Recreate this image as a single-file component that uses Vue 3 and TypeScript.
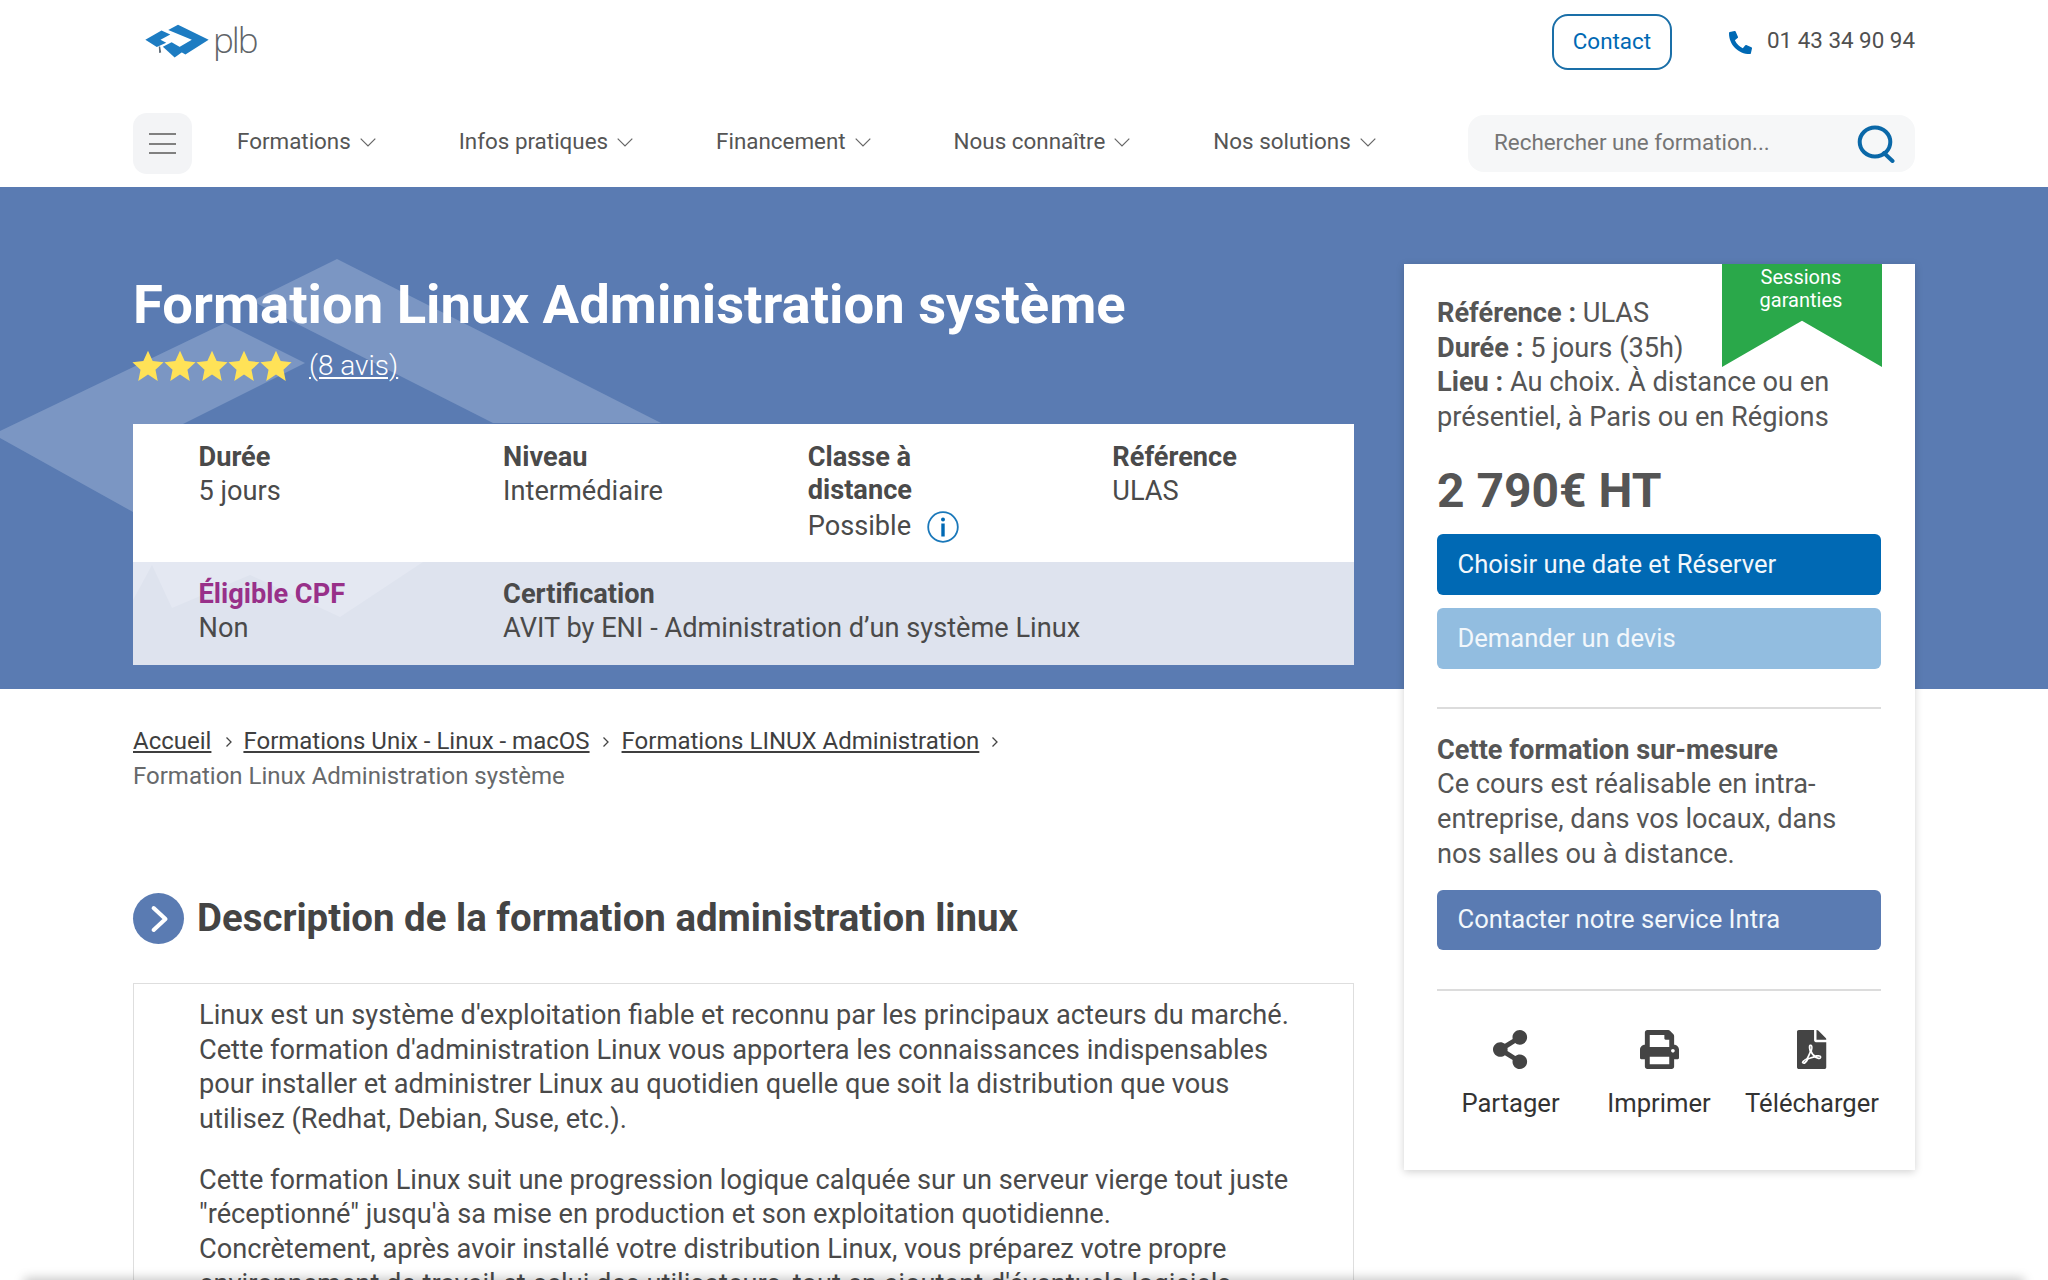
<script setup lang="ts">
const navItems: string[] = ['Formations', 'Infos pratiques', 'Financement', 'Nous connaître', 'Nos solutions']
const stars: number[] = [1, 2, 3, 4, 5]
</script>

<template>
  <div class="page">
    <header class="header">
      <div class="top">
        <a class="logo">
          <svg class="logo__mark" viewBox="24 32 196 104" aria-hidden="true">
            <path fill="#1d7cc2" d="M125 36 216 80 147 124 119 108 166 80 96 51Z" />
            <path fill="#1d7cc2" d="M28 80 76 53 102 65 73 80 90 89 62 102Z" />
            <path fill="#1d7cc2" d="M80 101 106 88 146 111 115 133Z" />
            <path fill="#5d6b78" d="M68 100 72 100 75 118 69 120Z" />
          </svg>
          <span class="logo__text">plb</span>
        </a>
        <a class="contact">Contact</a>
        <svg class="phone-icon" viewBox="0 0 512 512" aria-hidden="true">
          <path d="M497.39 361.8l-112-48a24 24 0 0 0-28 6.9l-49.6 60.6A370.66 370.66 0 0 1 130.6 204.11l60.6-49.6a23.94 23.94 0 0 0 6.9-28l-48-112A24.16 24.16 0 0 0 122.6.61l-104 24A24 24 0 0 0 0 48c0 256.5 207.9 464 464 464a24 24 0 0 0 23.4-18.6l24-104a24.29 24.29 0 0 0-14.01-27.6z" />
        </svg>
        <span class="phone">01 43 34 90 94</span>
      </div>

      <nav class="nav">
        <button class="burger" aria-label="Menu">
          <span></span><span></span><span></span>
        </button>
        <ul class="nav__list">
          <li v-for="item in navItems" :key="item" class="nav__item">
            {{ item }}
            <svg class="nav__chevron" viewBox="0 0 16 9" aria-hidden="true">
              <path d="M.7.7 8 8 15.300.7" />
            </svg>
          </li>
        </ul>
        <div class="search">
          <span class="search__text">Rechercher une formation...</span>
          <svg class="search__icon" viewBox="0 0 38 38" aria-hidden="true">
            <ellipse cx="18" cy="17" rx="15.300" ry="14.500" />
            <path d="M27 28 35.500 36" />
          </svg>
        </div>
      </nav>
    </header>

    <main class="main">
      <div class="hero-bg" aria-hidden="true">
        <svg class="hero-bg__art" viewBox="0 0 2048 502">
          <path fill="#7b96c3" d="M337 72 661 236 493 236 252 114Z" />
          <path fill="#7b96c3" d="M225 136 305 176 133 262 133 325 0 251 0 244Z" />
        </svg>
      </div>

      <section class="content">
        <div class="hero">
          <h1 class="hero__title">Formation Linux Administration système</h1>
          <div class="rating">
            <svg v-for="s in stars" :key="s" class="rating__star" viewBox="0 0 24 24" aria-hidden="true">
              <path d="M12 .6l3.500 7.700 8.200.9-6.100 5.700 1.700 8.400L12 18.400l-7.300 4.900 1.700-8.400L.3 9.200l8.200-.9z" />
            </svg>
            <a class="rating__link">(8 avis)</a>
          </div>

          <div class="facts">
            <div class="facts__row facts__row--top">
              <div class="fact">
                <strong>Durée</strong>
                <span>5 jours</span>
              </div>
              <div class="fact">
                <strong>Niveau</strong>
                <span>Intermédiaire</span>
              </div>
              <div class="fact">
                <strong>Classe à<br />distance</strong>
                <span class="fact__possible">
                  Possible
                  <svg class="info-icon" viewBox="0 0 32 32" aria-hidden="true">
                    <circle cx="16" cy="16" r="14.800" fill="none" stroke="#1a78ba" stroke-width="1.800" />
                    <circle cx="16" cy="8.500" r="2" fill="#0069b4" />
                    <rect x="14.300" y="12.500" width="3.400" height="13" fill="#0069b4" />
                  </svg>
                </span>
              </div>
              <div class="fact">
                <strong>Référence</strong>
                <span>ULAS</span>
              </div>
            </div>
            <div class="facts__row facts__row--bottom">
              <svg class="facts__art" viewBox="0 0 1221 103" aria-hidden="true">
                <path fill="#e4e8f2" d="M37 0 290 0 207 55 117 13 39 46 19 3 0 38 0 0Z" />
              </svg>
              <div class="fact">
                <strong class="fact__cpf">Éligible CPF</strong>
                <span>Non</span>
              </div>
              <div class="fact fact--wide">
                <strong>Certification</strong>
                <span>AVIT by ENI - Administration d’un système Linux</span>
              </div>
            </div>
          </div>
        </div>

        <ol class="crumbs">
          <li>
            <a>Accueil</a>
            <i><svg viewBox="0 0 8 12" aria-hidden="true"><path d="M1.500 1.500 6 6 1.500 10.500" /></svg></i>
          </li>
          <li>
            <a>Formations Unix - Linux - macOS</a>
            <i><svg viewBox="0 0 8 12" aria-hidden="true"><path d="M1.500 1.500 6 6 1.500 10.500" /></svg></i>
          </li>
          <li>
            <a>Formations LINUX Administration</a>
            <i><svg viewBox="0 0 8 12" aria-hidden="true"><path d="M1.500 1.500 6 6 1.500 10.500" /></svg></i>
          </li>
          <li class="crumbs__current">Formation Linux Administration système</li>
        </ol>

        <div class="section-title">
          <span class="section-title__badge">
            <svg viewBox="0 0 22 30" aria-hidden="true">
              <path d="M4 3 17 15 4 27" />
            </svg>
          </span>
          <h2>Description de la formation administration linux</h2>
        </div>

        <div class="description">
          <p>Linux est un système d'exploitation fiable et reconnu par les principaux acteurs du marché. Cette formation d'administration Linux vous apportera les connaissances indispensables pour installer et administrer Linux au quotidien quelle que soit la distribution que vous utilisez (Redhat, Debian, Suse, etc.).</p>
          <p>Cette formation Linux suit une progression logique calquée sur un serveur vierge tout juste "réceptionné" jusqu'à sa mise en production et son exploitation quotidienne.<br />Concrètement, après avoir installé votre distribution Linux, vous préparez votre propre environnement de travail et celui des utilisateurs, tout en ajoutant d'éventuels logiciels</p>
        </div>
      </section>

      <aside class="card">
        <div class="ribbon">Sessions<br />garanties</div>
        <p class="card__info">
          <b>Référence :</b> ULAS<br />
          <b>Durée :</b> 5 jours (35h)<br />
          <b>Lieu :</b> Au choix. À distance ou en présentiel, à Paris ou en Régions
        </p>
        <div class="card__price">2 790€ HT</div>
        <a class="btn btn--primary">Choisir une date et Réserver</a>
        <a class="btn btn--light">Demander un devis</a>
        <hr class="card__rule" />
        <p class="card__custom">
          <b>Cette formation sur-mesure</b><br />
          Ce cours est réalisable en intra-entreprise, dans vos locaux, dans nos salles ou à distance.
        </p>
        <a class="btn btn--intra">Contacter notre service Intra</a>
        <hr class="card__rule card__rule--last" />
        <div class="actions">
          <a class="action">
            <svg viewBox="0 0 448 512" aria-hidden="true">
              <path d="M352 320c-22.608 0-43.387 7.819-59.79 20.895l-102.486-64.054a96.551 96.551 0 0 0 0-41.683l102.486-64.054C308.613 184.181 329.392 192 352 192c53.019 0 96-42.981 96-96S405.019 0 352 0s-96 42.981-96 96c0 7.158.79 14.13 2.276 20.841L155.79 180.895C139.387 167.819 118.608 160 96 160c-53.019 0-96 42.981-96 96s42.981 96 96 96c22.608 0 43.387-7.819 59.79-20.895l102.486 64.054A96.301 96.301 0 0 0 256 416c0 53.019 42.981 96 96 96s96-42.981 96-96-42.981-96-96-96z" />
            </svg>
            <span>Partager</span>
          </a>
          <a class="action">
            <svg viewBox="0 0 512 512" aria-hidden="true">
              <path d="M448 192V77.25c0-8.49-3.37-16.62-9.37-22.63L393.37 9.37c-6-6-14.14-9.37-22.63-9.37H96C78.33 0 64 14.33 64 32v160c-35.35 0-64 28.65-64 64v112c0 8.84 7.16 16 16 16h48v96c0 17.67 14.33 32 32 32h320c17.67 0 32-14.33 32-32v-96h48c8.84 0 16-7.16 16-16V256c0-35.35-28.65-64-64-64zm-64 256H128v-96h256v96zm0-224H128V64h192v48c0 8.84 7.16 16 16 16h48v96zm48 72c-13.25 0-24-10.75-24-24 0-13.26 10.75-24 24-24s24 10.74 24 24c0 13.25-10.75 24-24 24z" />
            </svg>
            <span>Imprimer</span>
          </a>
          <a class="action">
            <svg viewBox="0 0 384 512" aria-hidden="true">
              <path d="M181.9 256.1c-5-16-4.9-46.9-2-46.9 8.4 0 7.6 36.9 2 46.9zm-1.7 47.2c-7.7 20.2-17.3 43.3-28.4 62.7 18.3-7 39-17.2 62.9-21.9-12.7-9.6-24.9-23.4-34.5-40.8zM86.1 428.1c0 .8 13.2-5.4 34.9-40.2-6.7 6.3-29.1 24.5-34.9 40.2zM248 160h136v328c0 13.3-10.7 24-24 24H24c-13.3 0-24-10.7-24-24V24C0 10.7 10.7 0 24 0h200v136c0 13.2 10.8 24 24 24zm-8 171.8c-20-12.2-33.3-29-42.7-53.8 4.5-18.5 11.6-46.6 6.2-64.2-4.7-29.4-42.4-26.5-47.8-6.8-5 18.3-.4 44.1 8.1 77-11.6 27.6-28.7 64.6-40.8 85.8-.1 0-.1.1-.2.1-27.1 13.9-73.6 44.5-54.5 68 5.6 6.9 16 10 21.5 10 17.9 0 35.7-18 61.1-61.8 25.8-8.5 54.1-19.1 79-23.2 21.7 11.8 47.1 19.5 64 19.5 29.2 0 31.2-32 19.7-43.4-13.9-13.6-54.3-9.7-73.6-7.2zM377 105L279 7c-4.5-4.5-10.6-7-17-7h-6v128h128v-6.1c0-6.3-2.5-12.4-7-16.9zm-74.1 255.3c4.1-2.7-2.5-11.9-42.8-9 37.1 15.8 42.8 9 42.8 9z" />
            </svg>
            <span>Télécharger</span>
          </a>
        </div>
      </aside>
    </main>

    <div class="bottom-bar" aria-hidden="true"></div>
  </div>
</template>

<style>
html,
body {
  margin: 0;
  background: #fff;
}
</style>

<style scoped>
.page {
  position: relative;
  height: 1280px;
  overflow: hidden;
  font-family: Roboto, "Liberation Sans", sans-serif;
  font-size: 27.2px;
  line-height: 34.67px;
  color: #4a4a4a;
  background: #fff;
}

/* header */
.header {
  height: 187px;
  padding: 0 133px;
  box-sizing: border-box;
}

.top {
  display: flex;
  align-items: center;
  height: 84px;
}

.logo {
  display: flex;
  align-items: center;
  gap: 3px;
  margin: -3px auto 0 11px;
}

.logo__mark {
  width: 66px;
  height: 36px;
}

.logo__text {
  font-family: "Open Sans", sans-serif;
  font-size: 35px;
  font-weight: 300;
  letter-spacing: -2px;
  color: #5f6468;
}

.contact {
  display: flex;
  align-items: center;
  justify-content: center;
  width: 120px;
  height: 56px;
  padding-bottom: 2px;
  box-sizing: border-box;
  border: 2px solid #1a6fa8;
  border-radius: 16px;
  font-size: 22.4px;
  color: #0069b4;
}

.phone-icon {
  width: 23px;
  height: 23px;
  margin: 1px 0 0 57px;
  fill: #0069b4;
}

.phone {
  margin: -3px 0 0 15px;
  font-size: 22.4px;
  color: #505050;
}

.nav {
  display: flex;
  align-items: center;
  height: 61px;
  margin-top: 29px;
}

.burger {
  display: flex;
  flex-direction: column;
  align-items: center;
  justify-content: center;
  gap: 7.500px;
  width: 59px;
  height: 61px;
  padding: 0;
  border: 0;
  border-radius: 14px;
  background: #f3f4f6;
}

.burger span {
  width: 27px;
  height: 2px;
  background: #808080;
}

.nav__list {
  display: flex;
  gap: 83px;
  margin: -5px auto 0 45px;
  padding: 0;
  list-style: none;
}

.nav__item {
  display: flex;
  align-items: center;
  gap: 9px;
  font-size: 22.4px;
  color: #555;
  white-space: nowrap;
}

.nav__chevron {
  width: 16px;
  height: 9px;
  margin-top: 4px;
  fill: none;
  stroke: #666;
  stroke-width: 1.200;
}

.search {
  display: flex;
  align-items: center;
  justify-content: space-between;
  width: 447px;
  height: 57px;
  padding: 0 20px 0 26px;
  box-sizing: border-box;
  border-radius: 16px;
  background: #f6f7f8;
}

.search__text {
  margin-top: -2px;
  font-size: 22.4px;
  color: #757575;
}

.search__icon {
  width: 38px;
  height: 38px;
  fill: none;
  stroke: #0a68a8;
  stroke-width: 4;
  stroke-linecap: round;
}

/* page body */
.main {
  position: relative;
  display: grid;
  grid-template-columns: 1221px 511px;
  column-gap: 50px;
  align-items: start;
  padding: 0 133px;
}

.hero-bg {
  position: absolute;
  top: 0;
  left: 0;
  width: 2048px;
  height: 502px;
  background: #5a7bb2;
}

.hero-bg__art {
  display: block;
  width: 2048px;
  height: 502px;
}

.content {
  position: relative;
  min-width: 0;
}

.hero {
  height: 502px;
  padding-top: 80px;
  box-sizing: border-box;
}

.hero__title {
  margin: 0;
  font-size: 54.4px;
  line-height: 76px;
  font-weight: 700;
  color: #fff;
}

.rating {
  display: flex;
  align-items: center;
  height: 34px;
  margin-top: 6px;
}

.rating__star {
  width: 32px;
  height: 32px;
  fill: #ffe257;
}

.rating__star:first-child {
  margin-left: -1px;
}

.rating__link {
  margin-left: 17px;
  font-size: 28px;
  font-weight: 300;
  color: #fff;
  text-decoration: underline;
}

.facts {
  margin-top: 41px;
}

.facts__row {
  display: grid;
  grid-template-columns: repeat(4, 304.6px);
  position: relative;
}

.facts__row--top {
  height: 138px;
  padding-top: 17px;
  box-sizing: border-box;
  background: #fff;
}

.facts__row--bottom {
  height: 103px;
  padding-top: 16px;
  box-sizing: border-box;
  background: #dee3ee;
}

.facts__art {
  position: absolute;
  top: 0;
  left: 0;
  width: 1221px;
  height: 103px;
}

.fact {
  position: relative;
  display: flex;
  flex-direction: column;
  padding-left: 65.5px;
}

.fact--wide {
  grid-column: span 3;
}

.fact strong {
  line-height: 33px;
  font-weight: 700;
}

.fact__cpf {
  color: #983089;
}

.fact__possible {
  display: flex;
  align-items: center;
  gap: 16px;
  margin-top: 2px;
}

.info-icon {
  width: 32px;
  height: 32px;
  margin-top: 2px;
}

/* breadcrumb */
.crumbs {
  display: flex;
  flex-wrap: wrap;
  margin: 35px 0 0;
  padding: 0;
  font-size: 24px;
  line-height: 35px;
  list-style: none;
}

.crumbs li {
  display: flex;
}

.crumbs a {
  color: #3f3f3f;
  text-decoration: underline;
}

.crumbs i {
  display: flex;
  align-items: center;
  justify-content: center;
  width: 32px;
}

.crumbs li:first-child i {
  padding-left: 4px;
  box-sizing: border-box;
}

.crumbs i svg {
  width: 8px;
  height: 12px;
  fill: none;
  stroke: #444;
  stroke-width: 1.300;
}

.crumbs__current {
  width: 100%;
  color: #67696b;
}

/* description */
.section-title {
  display: flex;
  align-items: center;
  gap: 13px;
  margin-top: 99px;
}

.section-title__badge {
  display: flex;
  align-items: center;
  justify-content: center;
  width: 51px;
  height: 51px;
  border-radius: 50%;
  background: #5a7bb2;
}

.section-title__badge svg {
  width: 20px;
  height: 28px;
  margin-left: 2px;
  fill: none;
  stroke: #fff;
  stroke-width: 4.500;
  stroke-linecap: round;
  stroke-linejoin: round;
}

.section-title h2 {
  margin: 0;
  padding-bottom: 2px;
  font-size: 38.4px;
  line-height: 48px;
  font-weight: 700;
  color: #444;
}

.description {
  margin-top: 39px;
  padding: 14px 60px 0 65px;
  border: 1px solid #dedede;
  border-bottom: 0;
}

.description p {
  margin: 0 0 26px;
}

/* sidebar */
.card {
  position: relative;
  height: 906px;
  margin-top: 77px;
  padding: 32px 34px 0 33px;
  box-sizing: border-box;
  background: #fff;
  box-shadow: 0 2px 8px rgba(0, 0, 0, 0.18);
}

.ribbon {
  position: absolute;
  top: 0;
  right: 33px;
  width: 160px;
  height: 103px;
  padding: 2px 2px 0 0;
  box-sizing: border-box;
  clip-path: polygon(0 0, 100% 0, 100% 100%, 50% 55%, 0 100%);
  background: #2aa84a;
  font-size: 20px;
  line-height: 23px;
  text-align: center;
  color: #fff;
}

.card__info,
.card__custom {
  margin: 0;
  color: #555;
}

.card b {
  font-weight: 700;
}

.card__price {
  margin-top: 29px;
  font-size: 48px;
  line-height: 54px;
  font-weight: 700;
  color: #555;
}

.btn {
  display: flex;
  align-items: center;
  height: 61px;
  padding-left: 20.5px;
  border-radius: 6px;
  font-size: 25.6px;
  color: #f2f7fb;
}

.btn--primary {
  margin-top: 16px;
  background: #0069b4;
}

.btn--light {
  margin-top: 13px;
  background: #92bde0;
}

.btn--intra {
  height: 60px;
  margin-top: 19px;
  padding-bottom: 2px;
  box-sizing: border-box;
  background: #5a7bb2;
}

.card__rule {
  height: 2px;
  margin: 38px 0 24px;
  border: 0;
  background: #dcdcdc;
}

.card__rule--last {
  margin: 39px 0 39px;
}

.actions {
  display: grid;
  grid-template-columns: 147px 150px 156px;
}

.action {
  display: flex;
  flex-direction: column;
  align-items: center;
  gap: 17px;
  color: #333;
  font-size: 25.6px;
}

.action svg {
  height: 39px;
  fill: #444;
}

/* shadow of the fixed bar under the fold */
.bottom-bar {
  position: fixed;
  left: 24px;
  right: 24px;
  bottom: -40px;
  height: 40px;
  box-shadow: 0 -2px 10px rgba(0, 0, 0, 0.22);
}
</style>
